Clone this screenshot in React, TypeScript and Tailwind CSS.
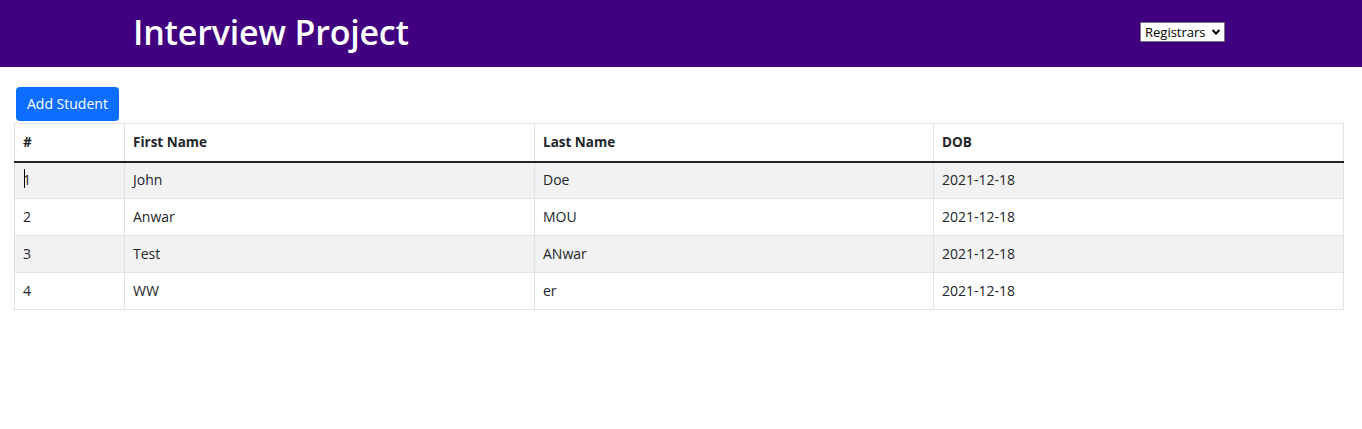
import React from "react";

const rows = [
  ["1", "John", "Doe", "2021-12-18"],
  ["2", "Anwar", "MOU", "2021-12-18"],
  ["3", "Test", "ANwar", "2021-12-18"],
  ["4", "WW", "er", "2021-12-18"],
];

export default function App() {
  const font = { fontFamily: '"Open Sans", "Noto Sans", Arial, sans-serif' };
  return (
    <div className="min-h-[429px] bg-white text-[#212529]" style={font}>
      <header className="h-[67px] bg-[#400080] flex items-center">
        <h1 className="ml-[133px] mt-[-4px] text-[34px] leading-none font-semibold text-white tracking-[-0.2px]">
          Interview Project
        </h1>
        <div className="ml-auto mr-[137px] mt-[-3px] h-[20px] w-[85px] bg-white border border-[#767676] flex items-center pl-[4px] pr-[3px] text-[13px] text-black">
          <span className="leading-none">Registrars</span>
          <svg className="ml-auto" width="10" height="8" viewBox="0 0 10 8">
            <path d="M1.5 2 L5 5.5 L8.5 2" fill="none" stroke="#000" strokeWidth="2" />
          </svg>
        </div>
      </header>
      <div className="pl-[14px] pr-[18px] pt-[20px]">
        <button className="ml-[2px] h-[34px] px-[11px] rounded-[4px] bg-[#0d6efd] text-white text-[14px] leading-none">
          Add Student
        </button>
        <table className="mt-[2px] w-full border-collapse text-[14px] table-fixed">
          <colgroup>
            <col className="w-[110px]" />
            <col className="w-[410px]" />
            <col className="w-[399px]" />
            <col />
          </colgroup>
          <thead>
            <tr className="h-[38px]">
              {["#", "First Name", "Last Name", "DOB"].map((h) => (
                <th
                  key={h}
                  className="border border-[#dee2e6] border-b-2 border-b-[#212529] px-[8px] text-left font-bold text-[13.5px]"
                >
                  {h}
                </th>
              ))}
            </tr>
          </thead>
          <tbody>
            {rows.map((r, i) => (
              <tr key={i} className={`h-[37px] ${i % 2 === 0 ? "bg-[#f2f2f2]" : "bg-white"}`}>
                {r.map((c, j) => (
                  <td key={j} className="border border-[#dee2e6] px-[8px] pb-[1px] text-[#212529]">
                    {i === 0 && j === 0 ? (
                      <span className="relative">
                        <span className="absolute left-[1px] top-[-1px] h-[19px] w-[1px] bg-black" />
                        {c}
                      </span>
                    ) : (
                      c
                    )}
                  </td>
                ))}
              </tr>
            ))}
          </tbody>
        </table>
      </div>
    </div>
  );
}
